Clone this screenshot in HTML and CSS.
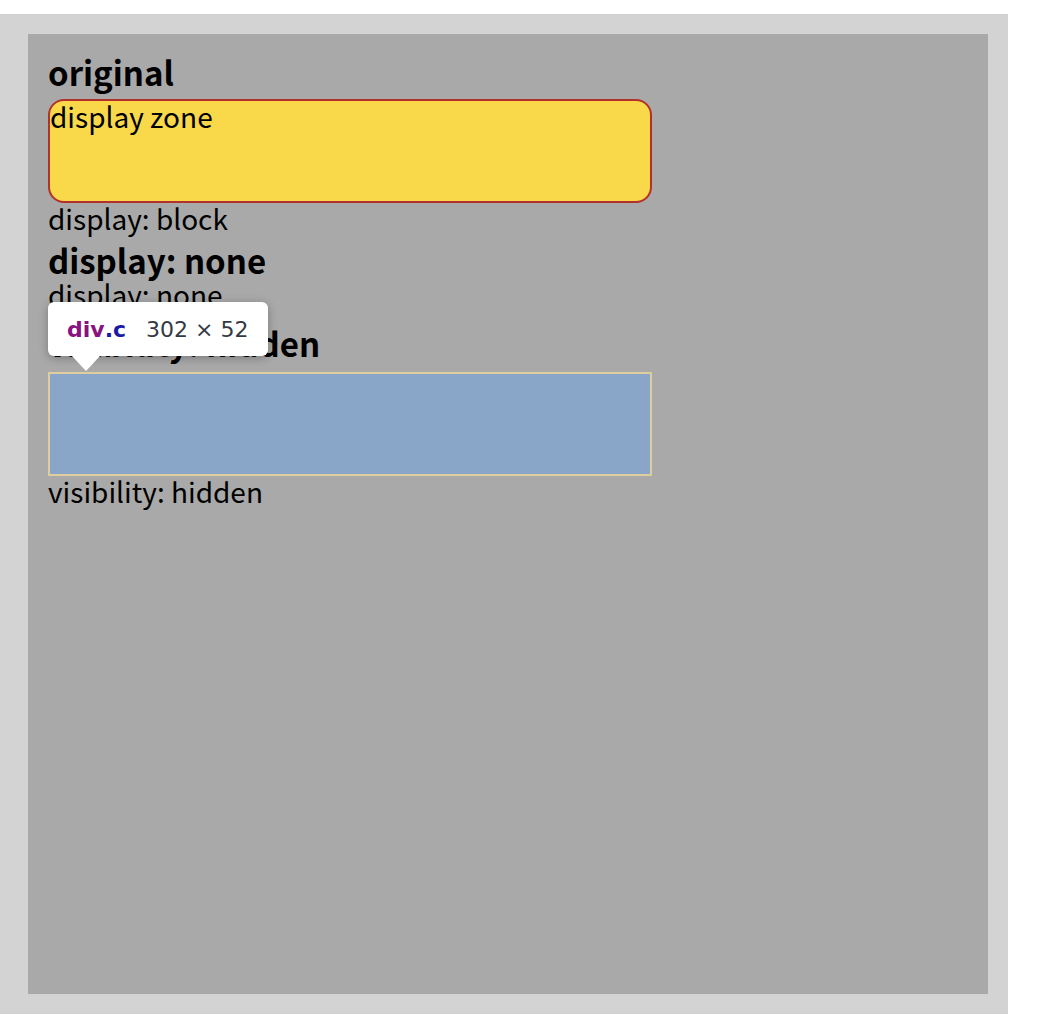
FILE: index.html
```html
<!DOCTYPE html>
<html>
<head>
<meta charset="utf-8">
<link rel="stylesheet" href="styles.css">
</head>
<body>
<div class="frame">
  <div class="canvas">
    <h2 class="title t1">original</h2>
    <div class="zone">display zone</div>
    <p class="label l1">display: block</p>
    <h2 class="title t2">display: none</h2>
    <p class="label l2">display: none</p>
    <h2 class="title t3">visibility: hidden</h2>
    <div class="hidden-box"></div>
    <p class="label l3">visibility: hidden</p>
    <div class="tip">
      <span class="tag">div</span><span class="cls">.c</span><span class="dims">302 × 52</span>
    </div>
  </div>
</div>
</body>
</html>
```

FILE: styles.css
```css
html, body {
  margin: 0;
  padding: 0;
  background: #ffffff;
}
body {
  font-family: "Noto Sans CJK KR", "Noto Sans", sans-serif;
  color: #000;
}
.frame {
  margin-top: 14px;
  width: 1008px;
  height: 1000px;
  box-sizing: border-box;
  padding: 20px 20px 20px 28px;
  background: #d3d3d3;
}
.canvas {
  position: relative;
  height: 960px;
  box-sizing: border-box;
  padding: 20px;
  background: #a9a9a9;
}
.title {
  margin: 0 0 10px;
  padding-top: 2px;
  font-size: 33px;
  font-weight: 700;
  line-height: 33px;
}
.label {
  margin: 0;
  padding-top: 1px;
  font-size: 28px;
  line-height: 28px;
}
.zone {
  width: 604px;
  height: 104px;
  box-sizing: border-box;
  border: 2px solid #b3312b;
  border-radius: 16px;
  background: #f9d84a;
  font-size: 28px;
  line-height: 30px;
}
.t2 { margin: 10px 0 2px; }
.t3 { margin: 17px 0 12px; }
.hidden-box {
  width: 604px;
  height: 104px;
  box-sizing: border-box;
  border: 2px solid #ddcd9f;
  background: #89a5c7;
}
.tip {
  position: absolute;
  left: 20px;
  top: 268px;
  width: 220px;
  height: 54px;
  box-sizing: border-box;
  padding: 0 0 0 19px;
  display: flex;
  align-items: center;
  background: #fff;
  border-radius: 6px;
  box-shadow: 0 2px 10px rgba(0,0,0,0.28);
  font-family: "DejaVu Sans", sans-serif;
  font-size: 22px;
}
.tip::after {
  content: "";
  position: absolute;
  left: 24px;
  top: 54px;
  border-left: 14px solid transparent;
  border-right: 14px solid transparent;
  border-top: 15px solid #fff;
}
.tag { color: #881280; font-weight: 700; }
.cls { color: #1a1aa6; font-weight: 700; }
.dims { color: #333a44; margin-left: 20px; }
```
